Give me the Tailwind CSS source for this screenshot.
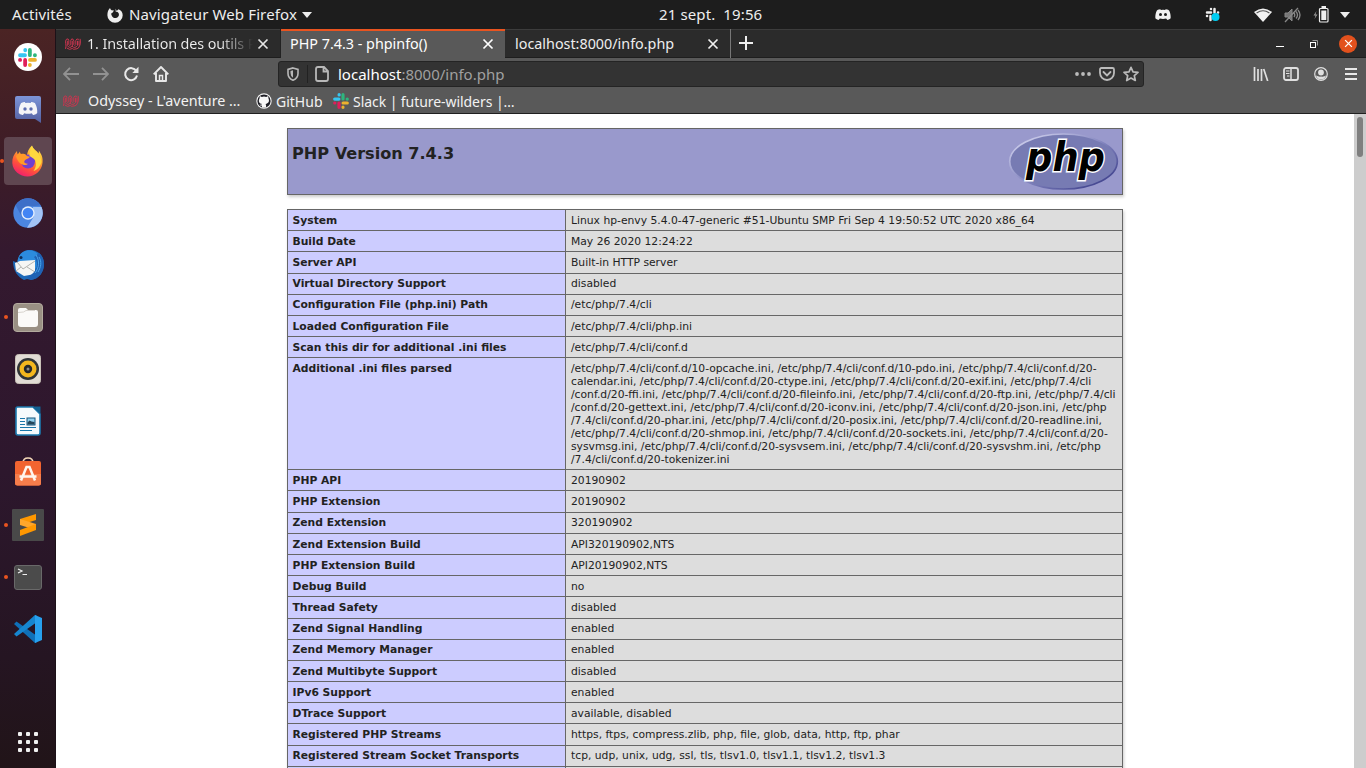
<!DOCTYPE html>
<html lang="fr">
<head>
<meta charset="utf-8">
<title>PHP 7.4.3 - phpinfo()</title>
<script src="https://cdn.jsdelivr.net/npm/@tailwindcss/browser@4"></script>
</head>
<body class="w-[1366px] h-[768px] overflow-hidden flex flex-col bg-white font-['Noto_Sans',sans-serif] text-[14px] text-[#eeeeee]">

<svg class="hidden">
  <symbol id="slack" viewBox="0 0 16 16">
    <g stroke-width="3.2" stroke-linecap="round" fill="none">
      <path d="M1.7 6.1H5.9M6.1 1.7v.2" stroke="#36c5f0"/><path d="M10 1.7V6M14.2 6.1h.1" stroke="#2eb67d"/>
      <path d="M10.1 10H14.3M10 14.2v.1" stroke="#ecb22e"/><path d="M6 10V14.3M1.7 10h.1" stroke="#e01e5a"/>
    </g>
  </symbol>
  <symbol id="odyssey" viewBox="0 0 16 16">
    <g fill="none" stroke="#c8354f" stroke-width="1" stroke-linecap="round">
      <path d="M.6 12.500Q1.500 10 .7 7.500T1.500 3.200Q3.500 2 3.800 4.500V8.500Q4.500 10.500 5.800 8.500V4.500Q6.500 2 8 3.200T8.800 8.500Q9.800 10.500 10.800 8.500V4.500Q11.500 2 13.500 3.200"/>
      <path d="M2.300 5.200V9.500Q4.500 13 7.300 10V5.200M7.300 10.500Q10 13 12.500 9.500V5.200M15.200 3.200Q15.800 6 15 9 14 13 11 13.200M2 12.200Q4.500 14.500 7.300 12.500 8.500 14 10.500 13M14 5v4"/>
    </g>
  </symbol>
  <symbol id="discord" viewBox="0 0 18 14">
    <path d="M6 1C3.500 1.300 2.500 2 2.300 2.300.8 5 .2 8 .4 11.300 2 13 4 13.200 4.300 13L5.500 11.500q3.500 1 7 0L13.700 13c.3.200 2.300 0 3.900-1.700C17.800 8 17.200 5 15.700 2.300 15.500 2 14.500 1.300 12 1l-.6.900q-2.400-.4-4.800 0z" fill="currentColor"/>
  </symbol>
  <symbol id="cross" viewBox="0 0 12 12"><path d="M1.500 1.500l9 9M10.500 1.500l-9 9" stroke="currentColor" stroke-width="1.7"/></symbol>
</svg>

<!-- GNOME top bar -->
<header class="h-[29px] shrink-0 bg-[#1d1d1d] flex items-center relative text-[15px] tracking-[0.12px]">
  <span class="ml-3 w-[95px]">Activités</span>
  <svg class="w-4 h-4 mr-[6px]" viewBox="0 0 16 16"><path d="M8 1.500c1 .8 1.500 1.600 1.700 2.500l1.800-1.700c2.700 1 4.200 3 4.200 5.900a7.600 7.600 0 0 1-15.300 0C.4 5 1.200 2.800 3 1c.2 1 .7 1.700 1.500 2.200L7 3.500 5.500 5.700C4 6 4.100 7 4.600 8.200 5.400 10.500 7 11.300 9 10.900c2-.5 3.200-2 2.900-4C11.500 5 10 4.500 8.700 4.700 8.900 3.300 8.500 2.200 8 1.500z" fill="#eeeeee"/></svg>
  <span class="w-[173px] whitespace-nowrap">Navigateur Web Firefox</span>
  <svg class="w-[10px] h-[6px]" viewBox="0 0 10 6"><path d="M0 0h10L5 6z" fill="#eee"/></svg>
  <span class="absolute left-[659px] whitespace-pre">21 sept.  19:56</span>
  <div class="ml-auto flex items-center">
    <div class="mr-[34px] relative w-4 h-[13px]"><svg class="w-4 h-[13px] text-[#f2f2f2]"><use href="#discord"/></svg><span class="absolute left-[4px] top-[5px] w-[3px] h-[3px] rounded-full bg-[#1d1d1d]"></span><span class="absolute left-[9px] top-[5px] w-[3px] h-[3px] rounded-full bg-[#1d1d1d]"></span></div>
    <svg class="w-4 h-4 mr-[33px]" viewBox="0 0 16 16"><g stroke="#eee" stroke-width="2.500" stroke-linecap="round"><path d="M2 5.500h4M6 2v.1M9.500 2v3.500M13 5.500h.1M2 9h.1M5.500 9v4"/></g><circle cx="10.500" cy="10" r="4" fill="#00cdf2"/></svg>
    <svg class="w-[18px] h-[14px] mr-3" viewBox="0 0 18 14"><path d="M0 4Q9-3 18 4L9 14z" fill="#f2f2f2"/><path d="M2.600 5Q9 .5 15.400 5" fill="none" stroke="#555" stroke-width="1.200"/></svg>
    <svg class="w-[17px] h-4 mr-3" viewBox="0 0 17 16" fill="none" stroke="#888"><path d="M1 6h3l4-4v12L4 10H1z" fill="#777"/><path d="M1 15L14 1M10 6q1.500 2 0 4M12 4.500q3 3.500 0 7M14 3q4 5 0 10" stroke-width="1.300"/></svg>
    <svg class="w-4 h-[17px] mr-[11px]" viewBox="0 0 16 17"><path d="M3.500 5L.5 9.500h2L1.500 13l3-4.500h-2z" fill="#999"/><rect x="6.500" y="2.500" width="8.500" height="13.500" rx="1" fill="none" stroke="#eee" stroke-width="1.200"/><path d="M8.300 4.500h5V14h-5zM8.500 0h4.500v2H8.500z" fill="#eee"/></svg>
    <svg class="w-[10px] h-[6px] mr-4" viewBox="0 0 10 6"><path d="M0 0h10L5 6z" fill="#eee"/></svg>
  </div>
</header>

<div class="flex flex-1 min-h-0">
<!-- Dock -->
<aside class="w-14 shrink-0 bg-[linear-gradient(#4b2424_0%,#3d1c27_18%,#34192f_30%,#2d172d_60%,#251522_85%,#211418_100%)] border-r border-[#1c1118] flex flex-col items-center">
  <div class="h-[52px] mt-[2px] flex items-center"><div class="w-7 h-7 rounded-full bg-white flex items-center justify-center"><svg class="w-[19px] h-[19px]"><use href="#slack"/></svg></div></div>
  <div class="h-[52px] flex items-center">
    <svg class="w-[26px] h-[28px]" viewBox="0 0 26 28"><defs><linearGradient id="dg" x2="0" y2="1"><stop stop-color="#7c95d8"/><stop offset="1" stop-color="#535f9f"/></linearGradient></defs><path d="M2 1h22q2 0 2 2v25l-6-4H2q-2 0-2-2V3q0-2 2-2z" fill="url(#dg)"/><g color="#f5f5f8"><use href="#discord" x="3" y="6" width="20" height="15"/></g><circle cx="10" cy="14" r="1.700" fill="#5c6cb0"/><circle cx="16" cy="14" r="1.700" fill="#5c6cb0"/></svg>
  </div>
  <div class="h-[52px] flex items-center relative"><span class="absolute left-0 w-1 h-1 rounded-full bg-[#e95420]"></span>
    <div class="w-12 h-12 ml-1 mr-1 rounded bg-[#5f4650] flex items-center justify-center">
      <svg class="w-[31px] h-[32px]" viewBox="0 0 31 32"><defs><linearGradient id="ff" x1=".8" x2=".3" y2="1"><stop stop-color="#fff14f"/><stop offset=".35" stop-color="#ffa92c"/><stop offset=".7" stop-color="#ff503c"/><stop offset="1" stop-color="#ef1d70"/></linearGradient></defs><path d="M20 .5c1 4 5 5 6.500 8 .5-1 .5-2 .2-3C30 10 31 13 30.500 18c-1 8-7.500 13.500-15 13.500S.8 26 .3 18C0 13 2 9 5 6c0 2 .5 3 1.500 4C10 8 14 9 15 11c0-4 2-8 5-10.500z" fill="url(#ff)"/><circle cx="16" cy="16.500" r="7" fill="#7040cf"/><path d="M4 11c2-2 3-3 4-4.500 0 1.500.5 2 1 2.500 2-.5 4-.3 6 2l3 .8c-1 2-4 2-5.500 4-1 2 1 3 3.500 3-2 3-10 1-12-7.800z" fill="#ff9a28"/><path d="M20 1c1 4 9 7 9.500 16-1 4-4 8-8 9 3-4 3-8 1.500-11-1.500-2-4-3-5.500-4 0-3 1-7 2.500-10z" fill="#ffd83f"/></svg>
    </div>
  </div>
  <div class="h-[52px] flex items-center"><svg class="w-[30px] h-[30px]" viewBox="0 0 30 30"><circle cx="15" cy="15" r="14.700" fill="#4b86e0"/><path d="M2.500 7A14.700 14.700 0 0 1 27.500 7.500L15 8.500 9 19z" fill="#3d6fc8"/><path d="M28.500 9A14.700 14.700 0 0 1 14 29.700l7-11.500L20 9z" fill="#a3c4f6"/><circle cx="15" cy="15" r="6.700" fill="#e5effd"/><circle cx="15" cy="15" r="5.300" fill="#4285f4"/></svg></div>
  <div class="h-[52px] flex items-center"><svg class="w-8 h-8" viewBox="0 0 32 32"><path d="M1 12l5 2C5 6 12 0 18 1c9 0 14 7 14 14 0 8-5 15-13 16l-4-1-3 1C6 28 1 22 1 12z" fill="#1d69b8"/><path d="M6 10C8 1 20-2 26 5c4 4 4 10 0 15L8 17C5 14 5 12 6 10z" fill="#2c8bdd"/><path d="M3 14l5-2 15-1 0 14-11 2-8-5z" fill="#f6f6f4"/><path d="M5 13l6 7 12-8M4 22l5-4M15 18l8 5" fill="none" stroke="#b4b4b0" stroke-width="1"/><path d="M22 8c5 5 4 16-7 20l4 3c8-1 13-8 13-16 0-5-2-9-5-11z" fill="#1f62b4"/><path d="M24 6c4 6 3 13-1 18M27 8c3 5 2 10-1 15" fill="none" stroke="#4aa3ea"/><circle cx="9" cy="8.500" r="1.500" fill="#102c55"/></svg></div>
  <div class="h-[52px] w-full flex items-center justify-center relative"><span class="absolute left-[4px] w-1 h-1 rounded-full bg-[#e95420]"></span><svg class="w-[30px] h-[29px]" viewBox="0 0 30 29"><rect x=".5" y=".5" width="29" height="28" rx="3.500" fill="#9a9084" stroke="#b3aa9e"/><path d="M5 7q0-2 2-2h6l2 2h8q2 0 2 2v12q0 3-3 3H8q-3 0-3-3z" fill="#fbfaf8"/><path d="M5 9.500q7 0 8-2h9" fill="none" stroke="#d8d4ce"/></svg></div>
  <div class="h-[52px] flex items-center"><svg class="w-[26px] h-[30px]" viewBox="0 0 26 30"><rect x=".5" y=".5" width="25" height="29" rx="3" fill="#e1dcd5" stroke="#c9c2b8"/><circle cx="13" cy="15" r="11" fill="#2f3437"/><circle cx="13" cy="15" r="8.500" fill="#f3b71e"/><circle cx="13" cy="15" r="4.200" fill="#24282c"/><circle cx="13" cy="15" r="1.500" fill="#8b8b8b"/></svg></div>
  <div class="h-[52px] flex items-center"><svg class="w-[26px] h-[30px]" viewBox="0 0 26 30"><path d="M2.500 1H18l7 7v19q0 2-2 2H3q-2 0-2-2V3q0-2 1.500-2z" fill="#f5fafc" stroke="#1c7bb0" stroke-width="1.600"/><path d="M17 .5h8.500V8z" fill="#136191"/><path d="M5 12.500h5M5 15.500h5M5 18.500h5M5 21.500h16M5 24.500h12" stroke="#1877aa" stroke-width="1.200"/><rect x="12" y="12" width="8" height="7" fill="#8fd0ed" stroke="#17557b"/><path d="M12.500 18.500v-2l2-2 2 1 3 .5v2.500z" fill="#23475c"/></svg></div>
  <div class="h-[52px] pb-[3px] flex items-center"><svg class="w-[28px] h-[29px]" viewBox="0 0 28 29"><path d="M9 6Q9 1 14 1t5 5" fill="none" stroke="#f4d9b8" stroke-width="1.500"/><path d="M1 6q0-2 2-2h22q2 0 2 2v20q0 2.500-2.500 2.500h-21Q1 28.500 1 26z" fill="#f26430"/><path d="M1 17h26v9q0 2.500-2.500 2.500h-21Q1 28.500 1 26z" fill="#f67d4b"/><path d="M7 23.500L12.500 10h3L21 23.500M5.500 19.500h17" fill="none" stroke="#fff6ee" stroke-width="2.500"/></svg></div>
  <div class="h-[52px] w-full flex items-center justify-center relative"><span class="absolute left-[4px] w-1 h-1 rounded-full bg-[#e95420]"></span><svg class="w-8 h-8" viewBox="0 0 32 32"><rect width="32" height="32" rx="1" fill="#494949"/><path d="M8 10l16-5v6L8 16z" fill="#ff9800"/><path d="M8 10v6l16 5v-6z" fill="#ffa62b"/><path d="M24 15v6L8 27v-6z" fill="#ff9800"/></svg></div>
  <div class="h-[52px] w-full flex items-center justify-center relative"><span class="absolute left-[4px] w-1 h-1 rounded-full bg-[#e95420]"></span><svg class="w-[28px] h-[25px]" viewBox="0 0 28 25"><rect x=".5" y=".5" width="27" height="24" rx="2.500" fill="#4b4b4b" stroke="#696969"/><path d="M4 4l4 2-4 2M8.500 9.500H13" fill="none" stroke="#eee" stroke-width="1.200"/></svg></div>
  <div class="h-[52px] flex items-center"><svg class="w-[28px] h-[28px]" viewBox="0 0 28 28"><path d="M0 9l2.500-2.500L23 21v6L21 28z" fill="#0f70b8"/><path d="M0 19l2.500 2.500L23 7V1L21 0z" fill="#1686d0"/><path d="M21 0l7 3v22l-7 3z" fill="#27a0ee"/></svg></div>
  <div class="mt-auto mb-[16px] grid grid-cols-3 gap-1">
    <i class="w-1 h-1 rounded-[1px] bg-[#f0f0f0]"></i><i class="w-1 h-1 rounded-[1px] bg-[#f0f0f0]"></i><i class="w-1 h-1 rounded-[1px] bg-[#f0f0f0]"></i><i class="w-1 h-1 rounded-[1px] bg-[#f0f0f0]"></i><i class="w-1 h-1 rounded-[1px] bg-[#f0f0f0]"></i><i class="w-1 h-1 rounded-[1px] bg-[#f0f0f0]"></i><i class="w-1 h-1 rounded-[1px] bg-[#f0f0f0]"></i><i class="w-1 h-1 rounded-[1px] bg-[#f0f0f0]"></i><i class="w-1 h-1 rounded-[1px] bg-[#f0f0f0]"></i>
  </div>
</aside>

<div class="flex-1 min-w-0 flex flex-col">
  <!-- Tabs -->
  <div class="h-[29px] shrink-0 bg-[#2b2b2b] flex text-[14.35px] shadow-[inset_0_1px_#3c3c3c,inset_0_-1px_#1e1e1e]">
    <div class="w-[225px] flex items-center pl-[9px] border-r border-[#222]">
      <svg class="w-4 h-4 mr-[6px]"><use href="#odyssey"/></svg>
      <span class="w-[166px] overflow-hidden whitespace-nowrap bg-linear-to-r from-[#eee] from-80% to-transparent to-100% bg-clip-text text-transparent tracking-[-0.1px]">1. Installation des outils P</span>
      <svg class="w-3 h-3 ml-[4px] shrink-0 text-[#e5e5e5]"><use href="#cross"/></svg>
    </div>
    <div class="w-[224px] flex items-center bg-[#595959] border-t-2 border-[#e95420] pl-[9px] pb-[2px] text-white">
      <span class="w-[192px]">PHP 7.4.3 - phpinfo()</span><svg class="w-3 h-3 mt-[1px]"><use href="#cross"/></svg>
    </div>
    <div class="w-[226px] flex items-center border-r border-[#777] pl-[10px]">
      <span class="w-[192px]">localhost:8000/info.php</span><svg class="w-3 h-3"><use href="#cross"/></svg>
    </div>
    <svg class="w-[14px] h-[14px] ml-2 mt-[7px]" viewBox="0 0 14 14"><path d="M7 0v14M0 7h14" stroke="#eee" stroke-width="2"/></svg>
    <div class="ml-auto flex items-center">
      <i class="w-2 h-px bg-white mt-[5px] mr-[26px]"></i>
      <svg class="w-2 h-2 mr-[21px]" viewBox="0 0 8 8" fill="none"><path d="M2.500.5h5v5" stroke="#999"/><rect x=".5" y="2.500" width="5" height="5" stroke="#fff"/></svg>
      <span class="w-[18px] h-[18px] rounded-full bg-[#e2511d] flex items-center justify-center mr-[9px]"><svg class="w-[9px] h-[9px] text-white"><use href="#cross"/></svg></span>
    </div>
  </div>

  <!-- Navigation and bookmarks -->
  <div class="h-[56px] shrink-0 bg-[#595959] border-b border-[#202020] flex flex-col">
    <div class="h-[32px] flex items-center text-[#e0e0e0]">
      <svg class="w-4 h-[14px] ml-[7px]" viewBox="0 0 16 14"><path d="M7 .8L1 7l6 6.200M1 7h15" fill="none" stroke="#929292" stroke-width="1.800"/></svg>
      <svg class="w-4 h-[14px] ml-[14px]" viewBox="0 0 16 14"><path d="M9 .8L15 7l-6 6.200M15 7H0" fill="none" stroke="#929292" stroke-width="1.800"/></svg>
      <svg class="w-4 h-4 ml-[14px]" viewBox="0 0 16 16"><path d="M13.300 5A6 6 0 1 0 14 9.500" fill="none" stroke="#e8e8e8" stroke-width="2"/><path d="M15.500.8V7H9.300z" fill="#e8e8e8"/></svg>
      <svg class="w-4 h-4 ml-[14px]" viewBox="0 0 16 16" fill="none" stroke="#e8e8e8" stroke-width="1.900"><path d="M.7 8.300L8 1l7.300 7.300M3 7v8h10V7" stroke-linejoin="round"/><path d="M6.500 15V9.500h3V15" stroke-width="1.500"/></svg>
      <div class="ml-[109px] w-[866px] h-[26px] rounded-[3px] bg-[#333] border border-[#242424] flex items-center">
        <svg class="w-3 h-[14px] ml-2" viewBox="0 0 12 14"><path d="M6 .9l5 1.500v4Q11 11 6 13.200 1 11 1 6.400v-4z" fill="none" stroke="#b8b8b8" stroke-width="1.600"/><path d="M6 3.200v7.500Q3.500 9 3.500 6V4z" fill="#b8b8b8"/></svg>
        <i class="w-px h-[18px] bg-[#222] ml-[8px]"></i>
        <svg class="w-[14px] h-4 ml-[7px]" viewBox="0 0 14 16"><path d="M3 1h6l4 4v8q0 2-2 2H3q-2 0-2-2V3q0-2 2-2zM8.500 1v4.500H13" fill="none" stroke="#b8b8b8" stroke-width="1.800"/></svg>
        <span class="ml-[9px] text-[#a0a0a0] text-[15px]"><span class="text-white">localhost</span>:8000/info.php</span>
        <svg class="w-4 h-1 ml-auto mr-2" viewBox="0 0 16 4" fill="#bbb"><circle cx="2" cy="2" r="1.900"/><circle cx="8" cy="2" r="1.900"/><circle cx="14" cy="2" r="1.900"/></svg>
        <svg class="w-4 h-[14px] mr-2" viewBox="0 0 16 14" fill="none" stroke="#bbb" stroke-width="1.800"><path d="M2.500 1h11Q15 1 15 2.500V6A7 7 0 0 1 1 6V2.500Q1 1 2.500 1z"/><path d="M4.500 5L8 8.400 11.500 5" stroke-linecap="round"/></svg>
        <svg class="w-4 h-4 mr-[4px]" viewBox="0 0 16 16"><path d="M8 1.300l2 4.500 5 .5-3.700 3.300 1 4.900L8 12l-4.300 2.500 1-4.900L1 6.300l5-.5z" fill="none" stroke="#bbb" stroke-width="1.700" stroke-linejoin="round"/></svg>
      </div>
      <svg class="w-4 h-[14px] ml-auto" viewBox="0 0 16 14" stroke="#e0e0e0" stroke-width="1.700"><path d="M1.500 0v14M5 2v12M8.500 2v12M10.700 2l4 12"/></svg>
      <svg class="w-4 h-[14px] ml-[14px]" viewBox="0 0 16 14" fill="none" stroke="#e0e0e0"><rect x="1" y="1" width="14" height="12" rx="2" stroke-width="1.800"/><path d="M8 1v12" stroke-width="1.500"/><path d="M3 4h3.500M3 6.500h3.500M4 9h2.500"/></svg>
      <svg class="w-[14px] h-[14px] ml-[15px]" viewBox="0 0 14 14"><circle cx="7" cy="7" r="6.300" fill="none" stroke="#e0e0e0" stroke-width="1.200"/><circle cx="7" cy="5.500" r="2.900" fill="#e0e0e0"/><path d="M2 8.500Q5 10 7 9.500q3 .5 5-1-1 4-5 4t-5-4z" fill="#e0e0e0"/></svg>
      <svg class="w-3 h-3 ml-[17px] mr-[9px]" viewBox="0 0 12 12"><path d="M0 1h12M0 6h12M0 11h12" stroke="#e8e8e8" stroke-width="1.800"/></svg>
    </div>
    <div class="h-[22px] flex items-center pl-[7px] text-[#f2f2f2]">
      <svg class="w-4 h-4"><use href="#odyssey"/></svg><span class="w-[169px] ml-[9px] whitespace-nowrap text-[14.35px]">Odyssey - L'aventure …</span>
      <svg class="w-4 h-4 -ml-[1px]" viewBox="0 0 16 16"><circle cx="8" cy="8" r="7.700" fill="#f4f4f4"/><circle cx="8" cy="8" r="6.600" fill="#1d1d24"/><path d="M3.800 3l2 .9q2.200-.6 4.400 0l2-.9.3 2.500c1.300 3-.2 5-2.900 5.400l.5 1.400V14.500H5.900v-2Q4 13 3.500 11.500 5 12 6.200 11c-2.800-.4-4.200-2.400-2.700-5.500z" fill="#f7f7f7"/></svg><span class="w-[57px] ml-[4px]">GitHub</span>
      <svg class="w-4 h-4"><use href="#slack"/></svg><span class="ml-[4px] whitespace-nowrap tracking-[-0.06px]">Slack | future-wilders |…</span>
    </div>
  </div>

  <!-- Page -->
  <div class="flex-1 min-h-0 flex bg-white text-[#222] font-['DejaVu_Sans',sans-serif]">
    <main class="ml-[231px] w-[836px] pt-[14px]">
      <div class="h-[67px] bg-[#9999cc] border border-[#666] shadow-[1px_2px_3px_#ccc] flex justify-between">
        <h1 class="text-[16.1px] font-bold pl-1 pt-[13px] leading-[24px]">PHP Version 7.4.3</h1>
        <svg class="w-[112px] h-[60px] mt-[3px] mr-[2px]" viewBox="0 0 112 60">
          <defs><linearGradient id="rim" x2="1" y2="1"><stop offset=".15" stop-color="#c4c5e6"/><stop offset=".5" stop-color="#8587c0"/><stop offset=".85" stop-color="#484a93"/></linearGradient></defs>
          <ellipse cx="55.500" cy="29.500" rx="53.800" ry="27.500" fill="#777bb3" stroke="url(#rim)" stroke-width="1.700"/>
          <text x="18" y="38.500" textLength="79" lengthAdjust="spacingAndGlyphs" font-family="DejaVu Sans" font-weight="bold" font-style="italic" font-size="40" fill="#000" stroke="#fff" stroke-width="3" paint-order="stroke">php</text>
        </svg>
      </div>
      <div id="info" class="mt-[14px] border border-[#666] border-b-0 shadow-[1px_2px_3px_#ccc] text-[10.75px] leading-[13px]"></div>
    </main>
    <div class="ml-auto w-3 bg-[#cdcdcd] pl-[3px] pt-[3px]"><div class="w-[6px] h-10 rounded-[3px] bg-[#7f7f7f]"></div></div>
  </div>
</div>
</div>

<script>
const rows = [
 [21,"System","Linux hp-envy 5.4.0-47-generic #51-Ubuntu SMP Fri Sep 4 19:50:52 UTC 2020 x86_64"],
 [21,"Build Date","May 26 2020 12:24:22"],
 [22,"Server API","Built-in HTTP server"],
 [21,"Virtual Directory Support","disabled",1],
 [21,"Configuration File (php.ini) Path","/etc/php/7.4/cli",1],
 [21,"Loaded Configuration File","/etc/php/7.4/cli/php.ini"],
 [21,"Scan this dir for additional .ini files","/etc/php/7.4/cli/conf.d"],
 [112,"Additional .ini files parsed","/etc/php/7.4/cli/conf.d/10-opcache.ini, /etc/php/7.4/cli/conf.d/10-pdo.ini, /etc/php/7.4/cli/conf.d/20-<br>calendar.ini, /etc/php/7.4/cli/conf.d/20-ctype.ini, /etc/php/7.4/cli/conf.d/20-exif.ini, /etc/php/7.4/cli<br>/conf.d/20-ffi.ini, /etc/php/7.4/cli/conf.d/20-fileinfo.ini, /etc/php/7.4/cli/conf.d/20-ftp.ini, /etc/php/7.4/cli<br>/conf.d/20-gettext.ini, /etc/php/7.4/cli/conf.d/20-iconv.ini, /etc/php/7.4/cli/conf.d/20-json.ini, /etc/php<br>/7.4/cli/conf.d/20-phar.ini, /etc/php/7.4/cli/conf.d/20-posix.ini, /etc/php/7.4/cli/conf.d/20-readline.ini,<br>/etc/php/7.4/cli/conf.d/20-shmop.ini, /etc/php/7.4/cli/conf.d/20-sockets.ini, /etc/php/7.4/cli/conf.d/20-<br>sysvmsg.ini, /etc/php/7.4/cli/conf.d/20-sysvsem.ini, /etc/php/7.4/cli/conf.d/20-sysvshm.ini, /etc/php<br>/7.4/cli/conf.d/20-tokenizer.ini"],
 [21,"PHP API","20190902"],
 [22,"PHP Extension","20190902"],
 [21,"Zend Extension","320190902",1],
 [21,"Zend Extension Build","API320190902,NTS"],
 [21,"PHP Extension Build","API20190902,NTS"],
 [21,"Debug Build","no"],
 [22,"Thread Safety","disabled"],
 [21,"Zend Signal Handling","enabled",1],
 [21,"Zend Memory Manager","enabled",1],
 [21,"Zend Multibyte Support","disabled"],
 [21,"IPv6 Support","enabled"],
 [21,"DTrace Support","available, disabled"],
 [22,"Registered PHP Streams","https, ftps, compress.zlib, php, file, glob, data, http, ftp, phar"],
 [21,"Registered Stream Socket Transports","tcp, udp, unix, udg, ssl, tls, tlsv1.0, tlsv1.1, tlsv1.2, tlsv1.3",1],
 [21,"",""]
];
document.getElementById('info').innerHTML = rows.map(([h,k,v,up]) => {
 const pad = up ? 'pt-[3px]' : 'pt-1';
 return `<div class="flex border-b border-[#666]" style="height:${h}px"><div class="w-[278px] shrink-0 bg-[#ccccff] border-r border-[#666] pl-[4.5px] ${pad} font-bold whitespace-nowrap">${k}</div><div class="flex-1 min-w-0 bg-[#dddddd] pl-[5px] ${pad} whitespace-nowrap">${v}</div></div>`;
}).join('');
</script>
</body>
</html>
